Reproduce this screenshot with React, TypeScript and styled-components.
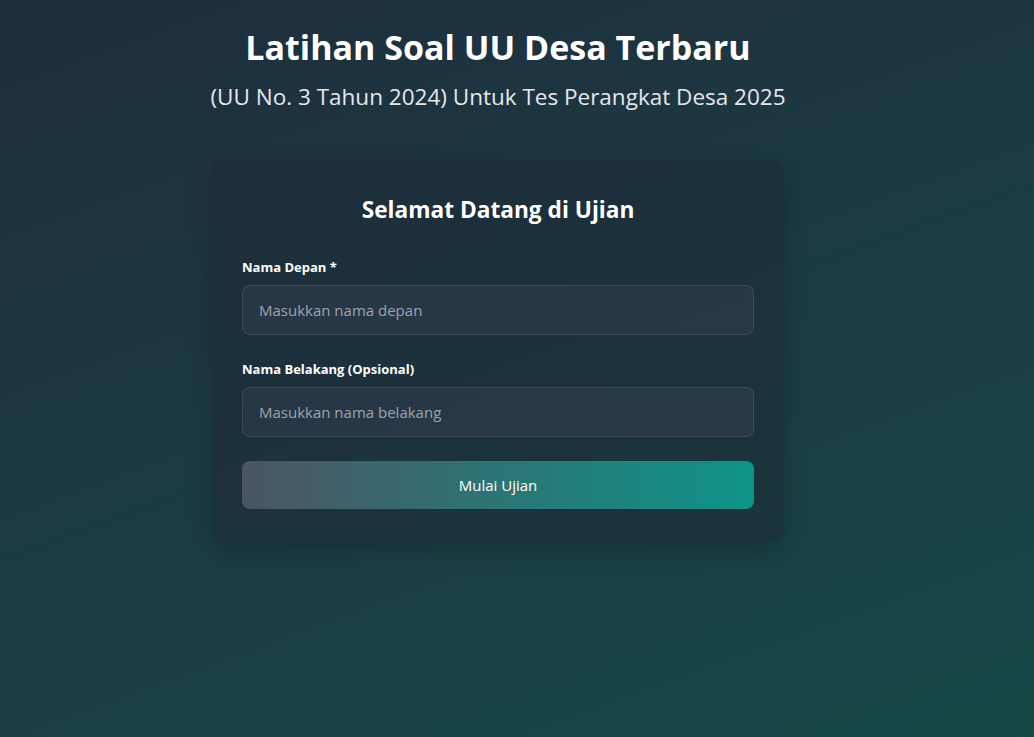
import styled, { createGlobalStyle } from 'styled-components';

const GlobalStyle = createGlobalStyle`
  html, body {
    margin: 0;
    padding: 0;
  }
  body {
    font-family: "Open Sans", "Noto Sans", sans-serif;
    color: #ffffff;
  }
  * {
    box-sizing: border-box;
  }
`

const Page = styled.div`
  min-height: 737px;
  background: linear-gradient(160deg, #1f2d3c 0%, #1c3a42 45%, #164846 100%);
  padding: 24px 38px 40px 0;
  display: flex;
  flex-direction: column;
  align-items: center;
`
const Header = styled.header`
  text-align: center;
  margin-bottom: 48px;
`
const Title = styled.h1`
  margin: 0;
  font-size: 34px;
  font-weight: 700;
  line-height: 46px;
`
const Subtitle = styled.p`
  margin: 12px 0 0;
  font-size: 22.5px;
  font-weight: 400;
  color: #e5e7eb;
  line-height: 30px;
`
const Card = styled.form`
  width: 572px;
  padding: 33px 30px 32px;
  background: rgba(30, 41, 55, 0.55);
  border-radius: 10px;
  box-shadow: 0 10px 25px rgba(0, 0, 0, 0.18);
  display: flex;
  flex-direction: column;
`
const CardTitle = styled.h2`
  margin: 0 0 31px;
  text-align: center;
  font-size: 22.7px;
  font-weight: 700;
  line-height: 34px;
`
const Field = styled.label<{ $last?: boolean }>`
  display: flex;
  flex-direction: column;
  gap: 9px;
  margin-bottom: ${(p) => (p.$last ? '24px' : '25px')};
`
const Label = styled.span`
  font-size: 13px;
  font-weight: 700;
  line-height: 18px;
`
const Input = styled.input`
  height: 50px;
  padding: 0 16px;
  background: rgba(55, 65, 81, 0.45);
  border: 1px solid rgba(255, 255, 255, 0.09);
  border-radius: 8px;
  color: #ffffff;
  font-family: inherit;
  font-size: 15px;
  outline: none;
  &::placeholder {
    color: #9ca3af;
  }
`
const Button = styled.button`
  height: 48px;
  border: none;
  border-radius: 8px;
  background: linear-gradient(90deg, #4b5563, #0d9488);
  color: #ffffff;
  font-family: inherit;
  font-size: 15px;
  cursor: pointer;
`

export default function App() {
  return (
    <Page>
      <GlobalStyle />
      <Header>
        <Title>Latihan Soal UU Desa Terbaru</Title>
        <Subtitle>(UU No. 3 Tahun 2024) Untuk Tes Perangkat Desa 2025</Subtitle>
      </Header>
      <Card onSubmit={(e) => e.preventDefault()}>
        <CardTitle>Selamat Datang di Ujian</CardTitle>
        <Field>
          <Label>Nama Depan *</Label>
          <Input type="text" placeholder="Masukkan nama depan" />
        </Field>
        <Field $last>
          <Label>Nama Belakang (Opsional)</Label>
          <Input type="text" placeholder="Masukkan nama belakang" />
        </Field>
        <Button type="submit">Mulai Ujian</Button>
      </Card>
    </Page>
  )
}
